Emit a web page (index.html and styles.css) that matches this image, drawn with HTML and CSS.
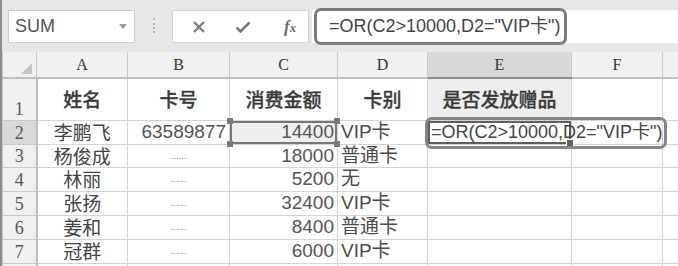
FILE: index.html
```html
<!DOCTYPE html>
<html lang="zh-CN">
<head>
    <meta charset="UTF-8">
    <title>SUM</title>
    <link rel="stylesheet" href="styles.css">
</head>
<body>
    <div class="app">
        <div class="toolbar">
            <div class="namebox">
                <span>SUM</span>
                <span class="caret"></span>
            </div>
            <div class="sep"></div>
            <div class="btns">
                <svg class="ico" width="14" height="14" viewBox="0 0 14 14">
                    <path d="M2 2 L12 12 M12 2 L2 12" stroke="#7a7a7a" stroke-width="2.2" fill="none"/>
                </svg>
                <svg class="ico" width="16" height="14" viewBox="0 0 16 14">
                    <path d="M1.5 7.5 L5.5 11.5 L14.5 2.5" stroke="#7a7a7a" stroke-width="2.6" fill="none"/>
                </svg>
                <span class="fx">f<i>x</i></span>
            </div>
            <div class="formula">
                <span class="mark">=OR(C2&gt;10000,D2="VIP卡")</span>
            </div>
        </div>
        <table class="sheet">
            <colgroup>
                <col style="width:34px">
                <col style="width:91px">
                <col style="width:102px">
                <col style="width:108px">
                <col style="width:90px">
                <col style="width:144px">
                <col style="width:91px">
                <col style="width:16px">
            </colgroup>
            <tr class="h-head">
                <th class="corner"><span class="tri"></span></th>
                <th>A</th>
                <th>B</th>
                <th>C</th>
                <th>D</th>
                <th class="sel">E</th>
                <th>F</th>
                <th></th>
            </tr>
            <tr class="h-r1">
                <th class="rn">1</th>
                <td class="title">姓名</td>
                <td class="title">卡号</td>
                <td class="title">消费金额</td>
                <td class="title">卡别</td>
                <td class="title e1">是否发放赠品</td>
                <td></td>
                <td></td>
            </tr>
            <tr class="h-r">
                <th class="rn rsel">2</th>
                <td class="name">李鹏飞</td>
                <td class="num">63589877</td>
                <td class="num ref">14400<i class="hd tl"></i><i class="hd tr"></i><i class="hd bl"></i><i class="hd br"></i></td>
                <td class="kind">VIP卡</td>
                <td class="active"><span class="edit">=OR(C2&gt;10000,D2="VIP卡")</span><i class="fill"></i><span class="note"></span></td>
                <td></td>
                <td></td>
            </tr>
            <tr class="h-r3">
                <th class="rn">3</th>
                <td class="name">杨俊成</td>
                <td class="dots">......</td>
                <td class="num">18000</td>
                <td class="kind">普通卡</td>
                <td class="ecol"></td>
                <td></td>
                <td></td>
            </tr>
            <tr class="h-r">
                <th class="rn">4</th>
                <td class="name">林丽</td>
                <td class="dots">......</td>
                <td class="num">5200</td>
                <td class="kind">无</td>
                <td class="ecol"></td>
                <td></td>
                <td></td>
            </tr>
            <tr class="h-r">
                <th class="rn">5</th>
                <td class="name">张扬</td>
                <td class="dots">......</td>
                <td class="num">32400</td>
                <td class="kind">VIP卡</td>
                <td class="ecol"></td>
                <td></td>
                <td></td>
            </tr>
            <tr class="h-r">
                <th class="rn">6</th>
                <td class="name">姜和</td>
                <td class="dots">......</td>
                <td class="num">8400</td>
                <td class="kind">普通卡</td>
                <td class="ecol"></td>
                <td></td>
                <td></td>
            </tr>
            <tr class="h-r">
                <th class="rn">7</th>
                <td class="name">冠群</td>
                <td class="dots">......</td>
                <td class="num">6000</td>
                <td class="kind">VIP卡</td>
                <td class="ecol"></td>
                <td></td>
                <td></td>
            </tr>
            <tr class="h-r">
                <th class="rn"></th>
                <td></td>
                <td></td>
                <td></td>
                <td></td>
                <td class="ecol"></td>
                <td></td>
                <td></td>
            </tr>
        </table>
    </div>
</body>
</html>
```

FILE: styles.css
```css
html, body {
    margin: 0;
    padding: 0;
    background: #fff;
}
.app {
    width: 676px;
    height: 266px;
    overflow: hidden;
    border-left: 2px solid #8c8c8c;
    font-family: "Liberation Sans", "Noto Sans CJK SC", sans-serif;
    color: #4a4a4a;
}
.toolbar {
    height: 52px;
    background: #e7e7e7;
    display: flex;
    align-items: flex-start;
}
.namebox {
    margin: 10px 0 0 6px;
    background: #fff;
    border: 1px solid #cdcdcd;
    display: flex;
    align-items: center;
    justify-content: space-between;
    padding: 0 7px 0 6px;
    box-sizing: border-box;
    width: 127px;
    height: 33px;
    font-size: 18px;
    color: #555;
}
.caret {
    width: 0;
    height: 0;
    border-left: 4px solid transparent;
    border-right: 4px solid transparent;
    border-top: 5px solid #9a9a9a;
}
.sep {
    margin: 18px 0 0 18px;
    height: 15px;
    border-left: 2px dotted #b4b4b4;
}
.btns {
    margin: 10px 0 0 17px;
    width: 137px;
    height: 33px;
    box-sizing: border-box;
    background: #fff;
    border: 1px solid #d3d3d3;
    display: flex;
    align-items: center;
    padding-left: 19px;
    gap: 29px;
}
.fx {
    font-family: "Liberation Serif", serif;
    font-style: italic;
    font-weight: bold;
    font-size: 17px;
    color: #6e6e6e;
    margin-left: 4px;
}
.fx i {
    font-size: 13px;
}
.formula {
    margin: 10px 0 0 3px;
    flex: 1;
    height: 33px;
    background: #fff;
    display: flex;
    align-items: center;
    padding-left: 2px;
}
.mark {
    box-sizing: border-box;
    width: 253px;
    height: 37px;
    border: 3px solid #7b7b7b;
    border-radius: 7px;
    padding-left: 12px;
    font-size: 18px;
    line-height: 31px;
    white-space: nowrap;
    color: #444;
}
.sheet {
    border-collapse: collapse;
    table-layout: fixed;
    width: 676px;
}
.sheet th, .sheet td {
    border: 1px solid #d4d4d4;
    padding: 0 3px;
    white-space: nowrap;
    overflow: visible;
}
.sheet th {
    background: #f1f1f1;
    border-color: #c9c9c9;
    font-family: "Liberation Serif", serif;
    font-weight: normal;
    font-size: 16px;
    color: #333;
}
.h-head {
    height: 26px;
}
.h-head th {
    border-top: none;
    border-bottom: 2px solid #bdbdbd;
}
.corner {
    position: relative;
}
.tri {
    position: absolute;
    right: 4px;
    bottom: 3px;
    width: 0;
    height: 0;
    border-left: 11px solid transparent;
    border-bottom: 11px solid #c4c4c4;
}
.sheet th.sel {
    background: #d8d8d8;
    border-bottom: 2px solid #8a8a8a;
}
.h-r1 {
    height: 42px;
}
.h-r {
    height: 24px;
}
.h-r3 {
    height: 23px;
}
.sheet th.rn {
    font-size: 18px;
    color: #555;
    vertical-align: bottom;
    line-height: 22px;
    border-right: 2px solid #bdbdbd;
}
.sheet th.rsel {
    background: #d9d9d9;
}
.title {
    text-align: center;
    font-family: "Noto Sans CJK SC", sans-serif;
    font-weight: 500;
    font-size: 19px;
    color: #3a3a3a;
    padding-top: 4px;
    -webkit-text-stroke: 0.3px #3a3a3a;
}
.e1 {
    background: #eeeeee;
    border-bottom: 2px solid #7a7a7a;
}
td {
    font-size: 19px;
    line-height: 20px;
}
.name {
    text-align: center;
    font-family: "Noto Sans CJK SC", sans-serif;
    color: #444;
}
.num {
    text-align: right;
    font-family: "Liberation Sans", sans-serif;
    color: #555;
    padding-right: 3px;
}
.kind {
    text-align: left;
    padding-left: 2px;
    color: #4a4a4a;
}
.dots {
    text-align: center;
    font-size: 10px;
    color: #8a8a8a;
}
.ecol {
    border-left-color: #9d9d9d;
    border-right-color: #9d9d9d;
    border-bottom-color: #b8b8b8;
}
.ref {
    position: relative;
    background: #efefef;
    box-shadow: inset 0 2px 0 #777, inset 0 -2px 0 #777, inset 2px 0 0 #777, inset -2px 0 0 #777;
    padding-right: 5px;
}
.hd {
    position: absolute;
    width: 6px;
    height: 6px;
    background: #7a7a7a;
}
.tl { left: -3px; top: -3px; }
.tr { right: -3px; top: -3px; }
.bl { left: -3px; bottom: -3px; }
.br { right: -3px; bottom: -3px; }
.active {
    position: relative;
    box-shadow: inset 0 0 0 2px #5f5f5f;
    padding-left: 4px;
    font-size: 18px;
    color: #444;
}
.fill {
    position: absolute;
    right: -3px;
    bottom: -3px;
    width: 6px;
    height: 6px;
    background: #5f5f5f;
    border: 1px solid #fff;
}
.note {
    position: absolute;
    left: -3px;
    top: -4px;
    width: 242px;
    height: 32px;
    border: 3px solid #858585;
    border-radius: 7px;
    box-sizing: border-box;
}
```
